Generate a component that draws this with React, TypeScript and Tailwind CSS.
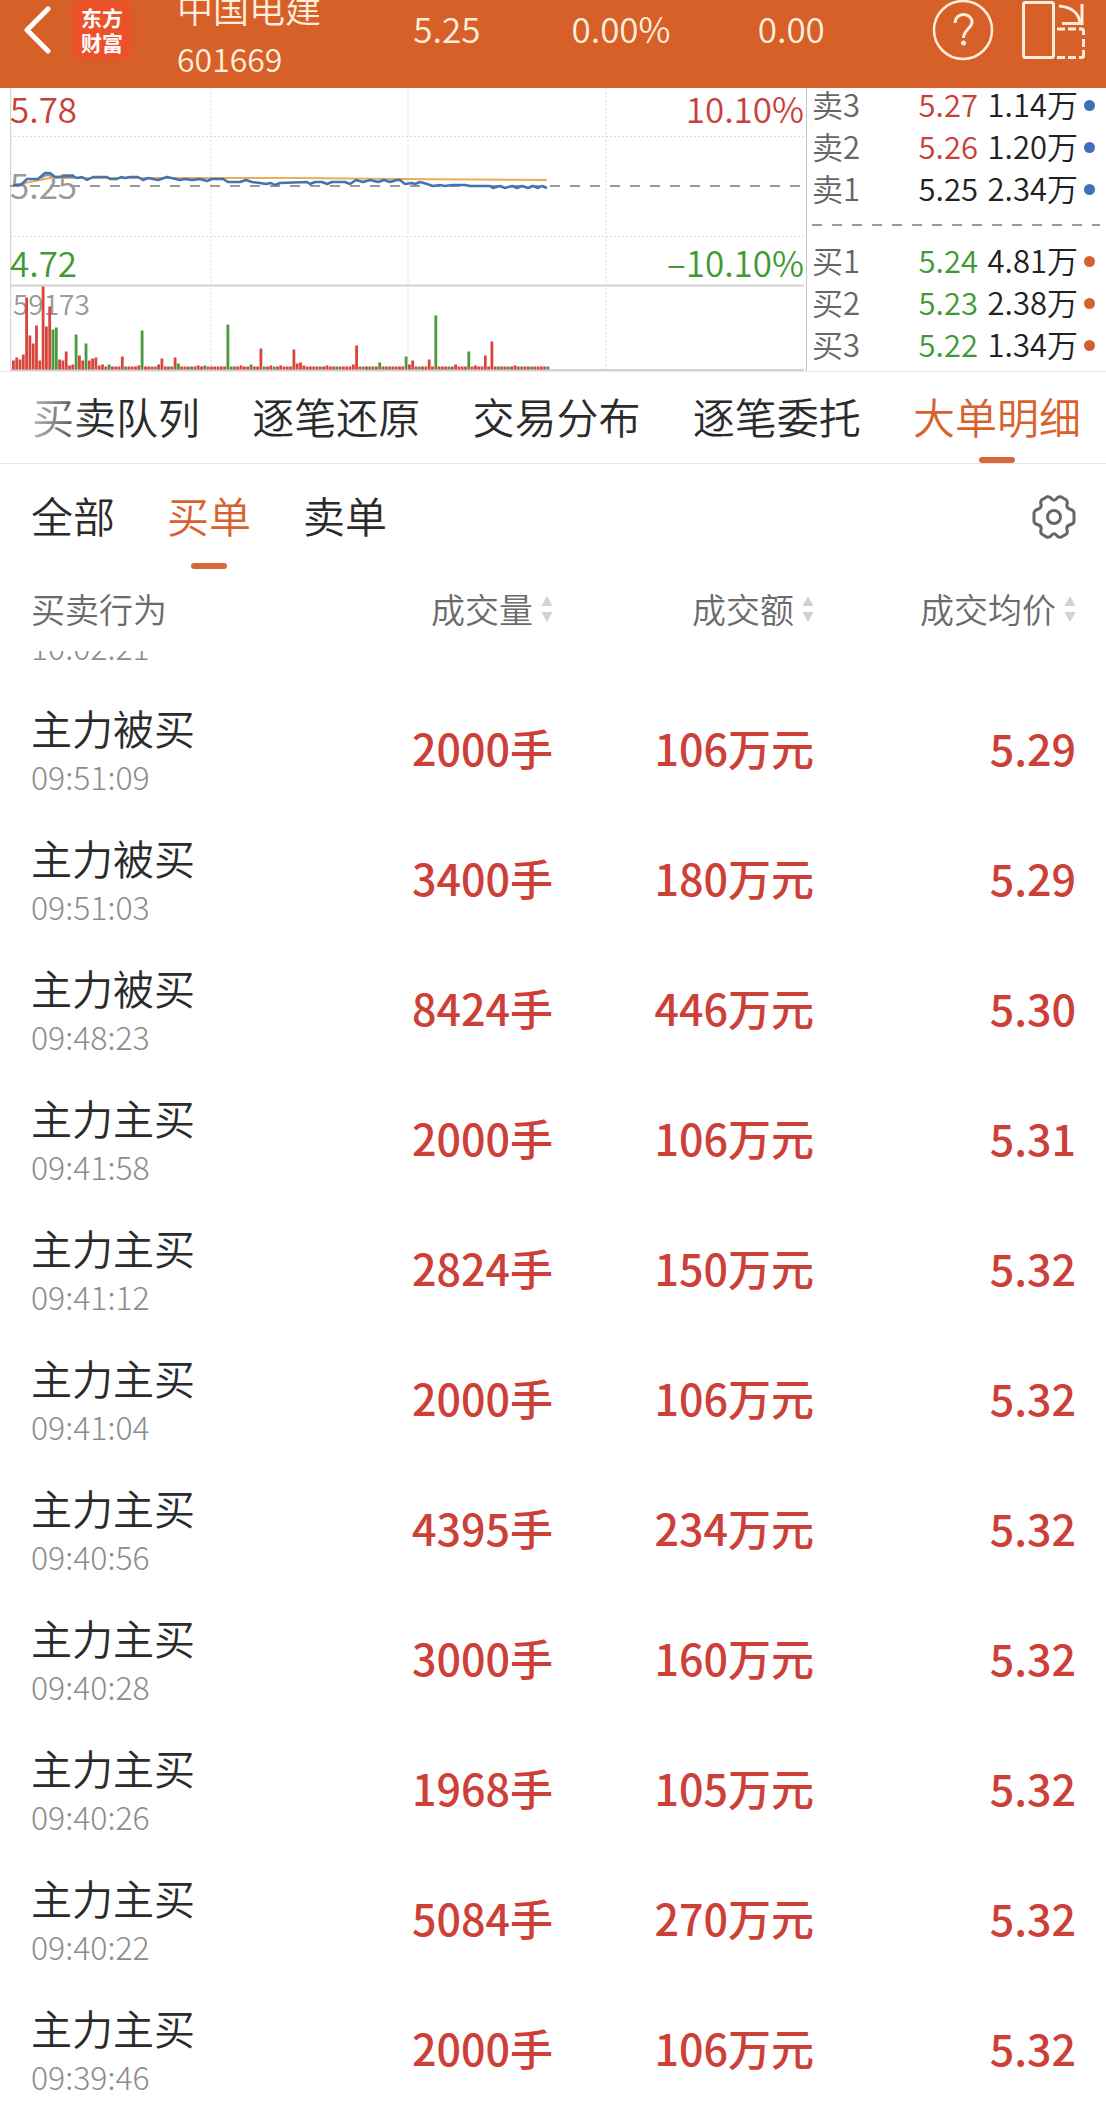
import { useState } from "react";
import clsx from "clsx";

type Quote = {
  label: string;
  price: string;
  volume: string;
  color: string;
};

const sells: Quote[] = [
  { label: "卖3", price: "5.27", volume: "1.14万", color: "text-[#c9403a]" },
  { label: "卖2", price: "5.26", volume: "1.20万", color: "text-[#c9403a]" },
  { label: "卖1", price: "5.25", volume: "2.34万", color: "text-[#222222]" },
];

const buys: Quote[] = [
  { label: "买1", price: "5.24", volume: "4.81万", color: "text-[#3f9a32]" },
  { label: "买2", price: "5.23", volume: "2.38万", color: "text-[#3f9a32]" },
  { label: "买3", price: "5.22", volume: "1.34万", color: "text-[#3f9a32]" },
];

const tabs = ["买卖队列", "逐笔还原", "交易分布", "逐笔委托", "大单明细"];
const filters = ["全部", "买单", "卖单"];
const sortColumns = ["成交量", "成交额", "成交均价"];

const orders = [
  { action: "主力被买", time: "09:51:09", volume: "2000手", amount: "106万元", price: "5.29" },
  { action: "主力被买", time: "09:51:03", volume: "3400手", amount: "180万元", price: "5.29" },
  { action: "主力被买", time: "09:48:23", volume: "8424手", amount: "446万元", price: "5.30" },
  { action: "主力主买", time: "09:41:58", volume: "2000手", amount: "106万元", price: "5.31" },
  { action: "主力主买", time: "09:41:12", volume: "2824手", amount: "150万元", price: "5.32" },
  { action: "主力主买", time: "09:41:04", volume: "2000手", amount: "106万元", price: "5.32" },
  { action: "主力主买", time: "09:40:56", volume: "4395手", amount: "234万元", price: "5.32" },
  { action: "主力主买", time: "09:40:28", volume: "3000手", amount: "160万元", price: "5.32" },
  { action: "主力主买", time: "09:40:26", volume: "1968手", amount: "105万元", price: "5.32" },
  { action: "主力主买", time: "09:40:22", volume: "5084手", amount: "270万元", price: "5.32" },
  { action: "主力主买", time: "09:39:46", volume: "2000手", amount: "106万元", price: "5.32" },
];

// minute index -> bar height, minutes that are missing get the base height
const BAR_COUNT = 163;
const barHeights: Record<number, number> = {
  0: 9, 1: 12, 2: 10, 3: 15, 4: 72, 5: 34, 6: 26, 7: 44, 8: 9, 9: 83,
  10: 43, 11: 63, 12: 40, 13: 42, 14: 10, 15: 9, 16: 18, 17: 4, 18: 5,
  19: 35, 20: 14, 21: 9, 22: 26, 23: 9, 24: 11, 25: 12, 26: 4, 27: 5,
  29: 5, 33: 13, 38: 4, 39: 39, 44: 5, 45: 11, 49: 12, 50: 6, 56: 4,
  58: 4, 65: 45, 69: 4, 72: 5, 75: 21, 78: 4, 81: 4, 85: 20, 86: 6,
  87: 7, 88: 4, 95: 4, 103: 5, 104: 24, 111: 7, 119: 13, 120: 5, 121: 9,
  126: 10, 128: 54, 134: 5, 138: 18, 140: 4, 143: 14, 145: 28, 152: 4,
};
const greenBars = new Set([
  12, 13, 19, 22, 29, 34, 39, 43, 48, 50, 54, 58, 65, 66, 72, 76, 79, 93, 98,
  106, 109, 111, 114, 119, 123, 128, 132, 138, 147, 150, 154, 157, 162,
]);

const pricePoints =
  "3,97 11,97 17,91 28,91 35,85 40,85 45,89 63,88 67,90 72,89 77,92 83,89 97,89 100,91 107,91 111,89 115,90 120,89 128,89 133,92 138,90 148,92 157,89 170,92 175,91 182,92 190,91 197,93 202,91 213,91 218,94 230,94 236,92 242,94 250,95 256,96 261,95 265,97 270,95 297,94 300,96 305,94 312,94 317,96 322,94 335,94 340,96 346,92 353,94 360,92 368,94 374,92 380,94 387,92 390,92 395,96 402,95 405,96 410,94 417,96 423,98 430,97 435,98 442,97 455,97 460,98 480,98 483,100 490,98 495,100 502,98 507,100 512,98 518,100 523,98 528,100 532,98 537,100";

const BackIcon = () => (
  <svg className="w-7 h-12" viewBox="0 0 28 48" fill="none">
    <path d="M25 3 4 24l21 21" stroke="#fff" strokeWidth="5" strokeLinecap="round" strokeLinejoin="round" />
  </svg>
);

const HelpIcon = () => (
  <svg className="size-[62px]" viewBox="0 0 62 62" fill="none" stroke="#ffeedd" strokeWidth="2.5">
    <circle cx="31" cy="31" r="29" />
    <path d="M23 24c0-5 3.500-8.500 8.500-8.500S40 19 40 23c0 6-8.500 8-8.500 16" strokeWidth="3" />
    <circle cx="31.500" cy="44" r="2.500" fill="#ffeedd" stroke="none" />
  </svg>
);

const RotateIcon = () => (
  <svg className="w-16 h-[60px]" viewBox="0 0 64 60" fill="none" stroke="#ffeedd" strokeWidth="3">
    <rect x="1.500" y="2.500" width="30" height="55" rx="2" />
    <path d="M37 6c12 1 20 7 21 17" />
    <path d="M60 4v19.500H40" />
    <path d="M35 29h8M46 29h8M57 29h2.500q2 0 2 2V35M61.500 39v8M61.500 50v5.500q0 2-2 2H57M54 57.500h-8M43 57.500h-8" />
  </svg>
);

const GearIcon = () => (
  <svg className="size-11" viewBox="0 0 44 44" fill="none" stroke="#666" strokeWidth="3" strokeLinejoin="round">
    <path d="M15 1.800Q18 1.200 19.500 3.800Q22 6.500 24.500 3.800Q26 1.200 29 1.800L34 4.700Q36 6.500 35 9.300Q34 13 38 14.200Q41 14.700 42 17.500V26.500Q41 29.300 38 29.800Q34 31 35 34.700Q36 37.500 34 39.300L29 42.200Q26 42.800 24.500 40.200Q22 37.500 19.500 40.200Q18 42.800 15 42.200L10 39.300Q8 37.500 9 34.700Q10 31 6 29.800Q3 29.300 2 26.500V17.500Q3 14.700 6 14.200Q10 13 9 9.300Q8 6.500 10 4.700Z" />
    <circle cx="22" cy="22" r="6.500" />
  </svg>
);

const SortIcon = () => (
  <svg className="w-3 h-7" viewBox="0 0 12 28" fill="#d2d2d2">
    <path d="M6 1l5.500 10H.5zM6 27l5.500-10H.5z" />
  </svg>
);

function Header() {
  return (
    <header className="h-[88px] overflow-hidden bg-[#d75f28] text-[#ffeedd] flex items-end">
      <div className="w-[177px] shrink-0 h-[88px] pb-7 pl-[23px] flex items-center gap-[22px]">
        <button aria-label="返回">
          <BackIcon />
        </button>
        <div className="size-[58px] rounded-lg bg-[#ec5129] text-white text-[21px] leading-[25px] font-bold flex flex-col items-center justify-center">
          <span>东方</span>
          <span>财富</span>
        </div>
      </div>
      <div className="flex-[236] flex flex-col pb-1">
        <h1 className="text-4xl/[50px]">中国电建</h1>
        <span className="text-[32px]/[52px]">601669</span>
      </div>
      <div className="flex-[518] h-[88px] pb-8 flex items-center text-[35px]">
        <span className="flex-[158]">5.25</span>
        <span className="flex-[186]">0.00%</span>
        <span className="flex-[174]">0.00</span>
      </div>
      <div className="h-[88px] pb-7 pr-5 flex items-center gap-7">
        <button aria-label="帮助">
          <HelpIcon />
        </button>
        <button aria-label="横屏">
          <RotateIcon />
        </button>
      </div>
    </header>
  );
}

function Chart() {
  return (
    <div className="relative flex-1 ml-[10px] h-[283px] leading-10 text-[35px]">
      <svg className="w-full h-full" viewBox="0 0 796 283" preserveAspectRatio="none" fill="none">
        <g stroke="#dcdcdc" strokeDasharray="2 2">
          <path d="M0 48.500H794M0 148.500H794M201 0V282M398 0V282M596 0V282" />
        </g>
        <path d="M0.500 0V282" stroke="#d6d6d6" strokeWidth="1.500" />
        <path d="M0 197.500H794M0 282H794" stroke="#d2d2d2" strokeWidth="2" />
        <path d="M0 98H790" stroke="#999" strokeWidth="2" strokeDasharray="10 10" />
      </svg>
      <span className="absolute left-0 top-0 text-[#c9403a]">5.78</span>
      <span className="absolute right-[2px] top-0 text-[#c9403a]">10.10%</span>
      <span className="absolute left-0 top-[76px] text-[#999999]">5.25</span>
      <span className="absolute left-0 top-[154px] text-[#3f9a32]">4.72</span>
      <span className="absolute right-[2px] top-[154px] text-[#3f9a32]">–10.10%</span>
      <span className="absolute left-[3px] top-[195px] text-[28px] text-[#999999]">59173</span>
      <svg className="absolute inset-0 w-full h-full" viewBox="0 0 796 283" preserveAspectRatio="none" fill="none">
        <path d="M3 97 20 94 40 90 290 90 390 91 537 92" stroke="#e9ae57" strokeWidth="2" />
        <polyline points={pricePoints} stroke="#4273b3" strokeWidth="2.500" strokeLinejoin="round" />
        {Array.from({ length: BAR_COUNT }, (_, i) => {
          const height = barHeights[i] ?? 3;
          return (
            <rect
              key={i}
              x={2 + i * 3.3}
              y={281.5 - height}
              width={2.8}
              height={height}
              fill={greenBars.has(i) ? "#4a9a3c" : "#d8453c"}
            />
          );
        })}
      </svg>
    </div>
  );
}

function QuoteRow({ quote, dot }: { quote: Quote; dot: string }) {
  return (
    <li className="h-[42px] shrink-0 flex items-center pr-[11px]">
      <div className="flex-1 flex pb-[2px] text-[31px]/[38px]">
        <span className="flex-1 text-[#666666]">{quote.label}</span>
        <span className={clsx("w-[70px] text-right", quote.color)}>{quote.price}</span>
        <span className="w-[100px] text-right text-[#222222]">{quote.volume}</span>
      </div>
      <span className={clsx("ml-[6px] size-[11px] rounded-full", dot)} />
    </li>
  );
}

function OrderBook() {
  return (
    <ul className="w-[300px] h-[283px] overflow-hidden border-l border-[#c8c8c8] pl-[5px] pb-[5px] flex flex-col justify-end">
      {sells.map((quote) => (
        <QuoteRow key={quote.label} quote={quote} dot="bg-[#4270b8]" />
      ))}
      <li className="h-[30px] shrink-0 flex items-center">
        <svg className="w-full h-[2px]" fill="none">
          <path d="M0 1H288" stroke="#999" strokeWidth="2" strokeDasharray="10 10" />
        </svg>
      </li>
      {buys.map((quote) => (
        <QuoteRow key={quote.label} quote={quote} dot="bg-[#d2622b]" />
      ))}
    </ul>
  );
}

function App() {
  const [activeTab, setActiveTab] = useState("大单明细");
  const [activeFilter, setActiveFilter] = useState("买单");

  return (
    <div className="w-full bg-white font-[350] text-[#2b2b2b] font-['Noto_Sans_CJK_SC',sans-serif]">
      <Header />

      <section className="flex">
        <Chart />
        <OrderBook />
      </section>

      <nav className="relative h-[93px] border-y border-[#e8e8e8] pl-8 pr-[25px] flex justify-between">
        {tabs.map((tab) => (
          <button
            key={tab}
            onClick={() => setActiveTab(tab)}
            className={clsx(
              "relative pb-1 text-[42px] whitespace-nowrap",
              activeTab === tab && "text-[#d8622c]"
            )}
          >
            {tab}
            {activeTab === tab && (
              <span className="absolute bottom-0 left-1/2 -translate-x-1/2 w-9 h-[6px] rounded-full bg-[#d8683a]" />
            )}
          </button>
        ))}
        <div className="absolute left-0 top-0 w-24 h-full bg-linear-to-r from-white to-white/0 pointer-events-none" />
      </nav>

      <div className="h-[107px] pl-[31px] pr-[30px] flex items-center justify-between">
        <div className="h-full flex gap-[52px]">
          {filters.map((filter) => (
            <button
              key={filter}
              onClick={() => setActiveFilter(filter)}
              className={clsx(
                "relative pb-[6px] text-[42px]",
                activeFilter === filter && "text-[#d8622c]"
              )}
            >
              {filter}
              {activeFilter === filter && (
                <span className="absolute bottom-[2px] left-1/2 -translate-x-1/2 w-9 h-[6px] rounded-full bg-[#d8683a]" />
              )}
            </button>
          ))}
        </div>
        <button aria-label="设置" className="pb-[2px]">
          <GearIcon />
        </button>
      </div>

      <table className="w-full table-fixed">
        <thead>
          <tr className="h-20 text-[34px]/[40px] text-[#6b6b6b]">
            <th className="pl-[31px] pb-1 text-left font-[350]">买卖行为</th>
            {sortColumns.map((column, i) => (
              <th
                key={column}
                className={clsx(
                  "pb-1 font-[350]",
                  i === 0 && "w-[230px]",
                  i === 1 && "w-[261px]",
                  i === 2 && "w-[292px] pr-[30px]"
                )}
              >
                <button className="w-full flex items-center justify-end gap-2">
                  {column}
                  <SortIcon />
                </button>
              </th>
            ))}
          </tr>
        </thead>
        <tbody>
          {/* row scrolled under the table head */}
          <tr>
            <td colSpan={4} className="pl-[31px]">
              <div className="h-[33px] overflow-hidden flex flex-col justify-end pb-[13px]">
                <span className="text-[32px]/[50px] font-light text-[#8c8c8c]">10:02:21</span>
              </div>
            </td>
          </tr>
          {orders.map((order) => (
            <tr
              key={order.time}
              className="h-[130px] text-right text-[43px]/[48px] font-medium text-[#cc4038]"
            >
              <td className="pl-[31px] pt-[19px] pb-[13px] text-left">
                <div className="text-[41px]/[48px] font-[350] text-[#2b2b2b]">{order.action}</div>
                <div className="text-[32px]/[50px] font-light text-[#8c8c8c]">{order.time}</div>
              </td>
              <td className="pb-1">{order.volume}</td>
              <td className="pb-1">{order.amount}</td>
              <td className="pb-1 pr-[30px]">{order.price}</td>
            </tr>
          ))}
        </tbody>
      </table>
    </div>
  );
}

export default App;
